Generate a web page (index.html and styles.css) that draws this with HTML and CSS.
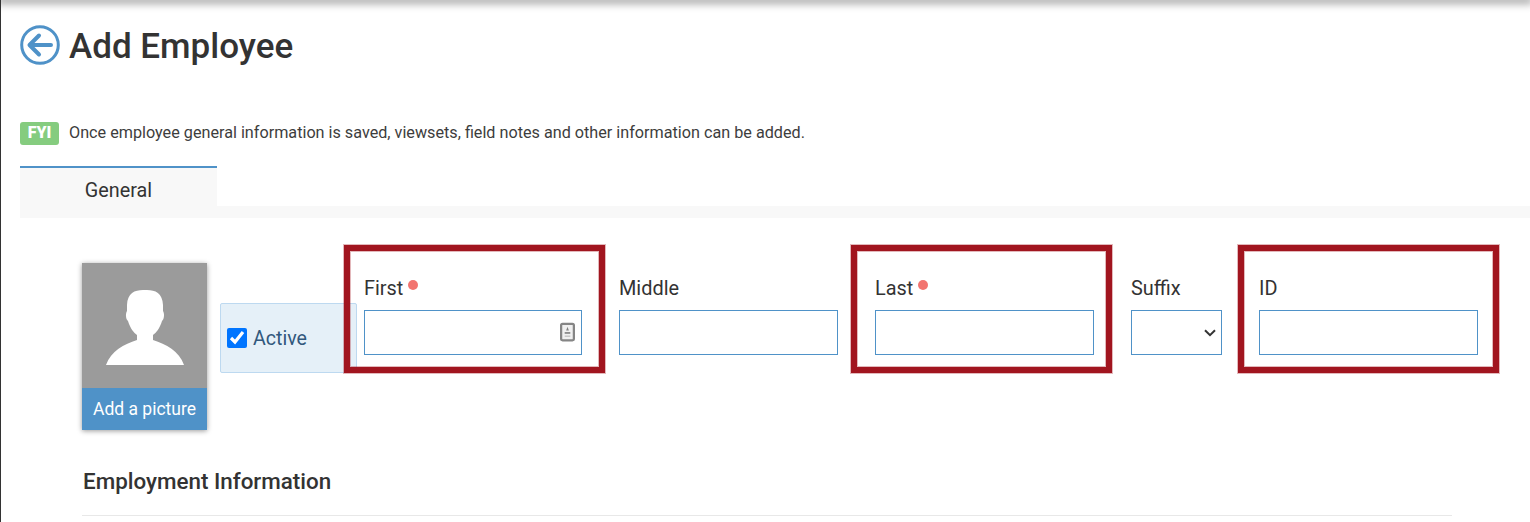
FILE: index.html
```html
<!DOCTYPE html>
<html lang="en">

<head>
    <meta charset="UTF-8">
    <meta name="viewport" content="width=device-width, initial-scale=1.0">
    <title>Add Employee</title>
    <link rel="stylesheet" href="styles.css">
</head>

<body>

<div class="top-shadow"></div>

<div class="page">
    <div class="title-row">
        <svg class="back-icon" viewBox="0 0 40 40" width="40" height="40">
            <circle cx="20" cy="20" r="18.3" fill="none" stroke="#4f92c8" stroke-width="3"></circle>
            <path d="M31 20H10M19 10.5L9.5 20L19 29.5" fill="none" stroke="#4f92c8" stroke-width="4" stroke-linecap="round" stroke-linejoin="round"></path>
        </svg>
        <h1>Add Employee</h1>
    </div>

    <div class="notice">
        <span class="fyi">FYI</span>
        <span class="notice-text">Once employee general information is saved, viewsets, field notes and other information can be added.</span>
    </div>

    <div class="tabs">
        <div class="tab">General</div>
    </div>

    <div class="form">
        <div class="form-row">
            <div class="photo">
                <div class="photo-image">
                    <svg viewBox="0 0 125 125" width="125" height="125">
                        <path d="M63 27C54 26.5 45.5 29 45 42V48C43.5 50 43.5 56 46 58C48 65 52 70 55 72V77C42 81 29 88 24 102H102C97 88 84 81 71 77V72C74 70 78 65 80 58C82.5 56 82.5 50 81 48V42C80.5 29 72 26.5 63 27Z" fill="#fff"></path>
                    </svg>
                </div>
                <div class="photo-button">Add a picture</div>
            </div>

            <label class="active-box">
                <input type="checkbox" checked>
                <span>Active</span>
            </label>

            <div class="fields">
                <div class="field field-first">
                    <label class="field-label">First<span class="required"></span></label>
                    <div class="input-wrap">
                        <input type="text">
                        <svg class="contact-icon" viewBox="0 0 16 20" width="15" height="20">
                            <rect x="1.2" y="1.2" width="13.6" height="17.6" rx="1.5" fill="#f0f0f0" stroke="#858585" stroke-width="2.4"></rect>
                            <path d="M8 4.5L9.5 8.5H6.5Z" fill="#808080"></path>
                            <path d="M5 11H11" stroke="#8f8f8f" stroke-width="2"></path>
                            <path d="M5 14.5H11" stroke="#c4c4c4" stroke-width="1.5"></path>
                        </svg>
                    </div>
                    <div class="highlight highlight-first"></div>
                </div>
                <div class="field field-wide">
                    <label class="field-label">Middle</label>
                    <input type="text">
                </div>
                <div class="field field-wide">
                    <label class="field-label">Last<span class="required"></span></label>
                    <input type="text">
                    <div class="highlight highlight-last"></div>
                </div>
                <div class="field field-suffix">
                    <label class="field-label">Suffix</label>
                    <div class="input-wrap">
                        <select>
                            <option></option>
                        </select>
                        <svg class="select-arrow" viewBox="0 0 12 8" width="12" height="8">
                            <path d="M1 1.2L6 6.2L11 1.2" fill="none" stroke="#333" stroke-width="2"></path>
                        </svg>
                    </div>
                </div>
                <div class="field field-wide">
                    <label class="field-label">ID</label>
                    <input type="text">
                    <div class="highlight highlight-id"></div>
                </div>
            </div>
        </div>

        <h2>Employment Information</h2>
        <hr>
    </div>
</div>

</body>

</html>
```

FILE: styles.css
```css
body {
    margin: 0;
    height: 522px;
    overflow: hidden;
    background-color: #fff;
    color: #333;
    font-family: Roboto, sans-serif;
}

.top-shadow {
    height: 0;
    box-shadow: 0 0 9px 3px rgba(0, 0, 0, 0.45);
}

.page {
    height: 522px;
    border-left: 1px solid #333;
    padding-left: 19px;
}

.title-row {
    display: flex;
    align-items: center;
    gap: 9px;
    padding-top: 25px;
    height: 40px;
}

.title-row h1 {
    margin: 4px 0 0;
    font-size: 35px;
    font-weight: 500;
    line-height: 40px;
}

.back-icon {
    flex: none;
}

.notice {
    display: flex;
    align-items: center;
    gap: 10px;
    margin-top: 57px;
    height: 23px;
    font-size: 16.2px;
    color: #3d3d3d;
}

.notice-text {
    position: relative;
    top: -1px;
}

.fyi {
    width: 39px;
    height: 23px;
    line-height: 21px;
    border-radius: 3px;
    background-color: #85cc7f;
    color: #fff;
    font-size: 16px;
    font-weight: 900;
    text-align: center;
}

.tabs {
    margin-top: 21px;
    height: 52px;
    background: linear-gradient(#fff 40px, #f8f8f8 40px);
}

.tab {
    width: 197px;
    height: 50px;
    border-top: 2px solid #4f92c8;
    background-color: #f8f8f8;
    font-size: 19.8px;
    line-height: 46px;
    text-align: center;
}

.form {
    padding-left: 62px;
    width: 1370px;
}

.form-row {
    display: flex;
    align-items: flex-start;
    margin-top: 45px;
}

.photo {
    flex: none;
    width: 125px;
    box-shadow: 0 1px 5px rgba(0, 0, 0, 0.4);
}

.photo-image {
    height: 125px;
    background-color: #9b9b9b;
}

.photo-image svg {
    display: block;
}

.photo-button {
    height: 42px;
    background-color: #4f92c8;
    color: #fff;
    font-size: 17.5px;
    line-height: 42px;
    text-align: center;
}

.active-box {
    flex: none;
    display: flex;
    align-items: center;
    gap: 6px;
    box-sizing: border-box;
    width: 137px;
    height: 70px;
    margin: 40px 0 0 13px;
    padding-left: 6px;
    border: 1px solid #bdd9f0;
    border-radius: 2px;
    background-color: #e5f0f8;
    color: #31587d;
    font-size: 19.6px;
}

.active-box input {
    width: 20px;
    height: 20px;
    margin: 0;
}

.fields {
    display: flex;
    gap: 37px;
    margin: 13px 0 0 7px;
}

.field {
    position: relative;
}

.field-first {
    width: 218px;
}

.field-wide {
    width: 219px;
}

.field-suffix {
    width: 91px;
}

.field-label {
    display: block;
    height: 34px;
    font-size: 19.9px;
    line-height: 26px;
}

.field input[type="text"],
.field select {
    display: block;
    box-sizing: border-box;
    width: 100%;
    height: 45px;
    border: 1px solid #4f92c8;
    border-radius: 0;
    background-color: #fff;
    outline: none;
}

.field select {
    appearance: none;
}

.input-wrap {
    position: relative;
}

.contact-icon {
    position: absolute;
    right: 7px;
    top: 12px;
}

.select-arrow {
    position: absolute;
    right: 6px;
    top: 19px;
}

.required {
    display: inline-block;
    width: 10px;
    height: 10px;
    margin-left: 5px;
    border-radius: 50%;
    background-color: #f2746f;
    vertical-align: 5px;
}

.highlight {
    position: absolute;
    top: -31px;
    bottom: -18px;
    width: 261px;
    box-sizing: border-box;
    border: 6px solid #a1151f;
    box-shadow: 0 0 0 1px rgba(161, 21, 31, 0.3), inset 0 0 0 1px rgba(161, 21, 31, 0.3);
}

.highlight-first {
    left: -20px;
}

.highlight-last {
    left: -24px;
}

.highlight-id {
    left: -21px;
}

.form h2 {
    margin: 36px 0 0 1px;
    font-size: 22.4px;
    font-weight: 500;
    line-height: 30px;
}

.form hr {
    margin: 19px 0 0;
    border: 0;
    border-top: 1px solid #e8e8e8;
}
```
